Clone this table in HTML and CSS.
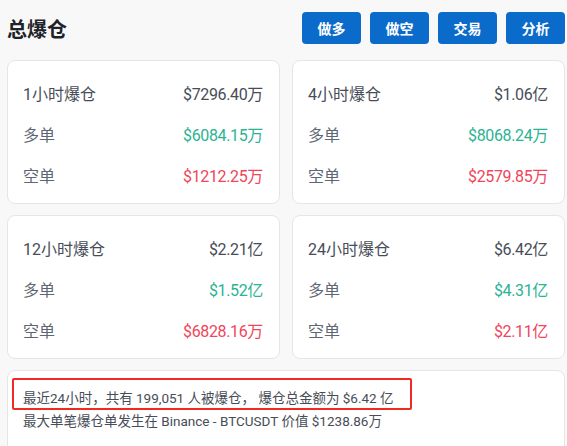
FILE: index.html
```html
<!DOCTYPE html>
<html lang="zh">
<head>
<meta charset="utf-8">
<link rel="stylesheet" href="styles.css">
</head>
<body>
<div class="page">
  <div class="header">
    <h1 class="title">总爆仓</h1>
    <div class="actions">
      <button class="btn">做多</button>
      <button class="btn">做空</button>
      <button class="btn">交易</button>
      <button class="btn">分析</button>
    </div>
  </div>
  <div class="grid">
    <div class="card">
      <div class="row head"><span class="label">1小时爆仓</span><span class="val">$7296.40万</span></div>
      <div class="row"><span class="label">多单</span><span class="val up">$6084.15万</span></div>
      <div class="row"><span class="label">空单</span><span class="val down">$1212.25万</span></div>
    </div>
    <div class="card">
      <div class="row head"><span class="label">4小时爆仓</span><span class="val">$1.06亿</span></div>
      <div class="row"><span class="label">多单</span><span class="val up">$8068.24万</span></div>
      <div class="row"><span class="label">空单</span><span class="val down">$2579.85万</span></div>
    </div>
    <div class="card">
      <div class="row head"><span class="label">12小时爆仓</span><span class="val">$2.21亿</span></div>
      <div class="row"><span class="label">多单</span><span class="val up">$1.52亿</span></div>
      <div class="row"><span class="label">空单</span><span class="val down">$6828.16万</span></div>
    </div>
    <div class="card">
      <div class="row head"><span class="label">24小时爆仓</span><span class="val">$6.42亿</span></div>
      <div class="row"><span class="label">多单</span><span class="val up">$4.31亿</span></div>
      <div class="row"><span class="label">空单</span><span class="val down">$2.11亿</span></div>
    </div>
  </div>
  <div class="summary">
    <p class="line highlight">最近24小时，共有 199,051 人被爆仓， 爆仓总金额为 $6.42 亿</p>
    <p class="line">最大单笔爆仓单发生在 Binance - BTCUSDT 价值 $1238.86万</p>
  </div>
</div>
</body>
</html>
```

FILE: styles.css
```css
* { box-sizing: border-box; }
html, body { margin: 0; padding: 0; }
body {
  background: #f8f8f8;
  font-family: Roboto, "Noto Sans CJK SC", sans-serif;
  color: #474d57;
}
.page {
  padding: 12px 2px 0 7px;
}
.header {
  display: flex;
  align-items: center;
  justify-content: space-between;
  height: 32px;
}
.title {
  margin: 0;
  font-size: 20px;
  font-weight: 700;
  color: #1e2329;
  font-family: "Noto Sans CJK SC", sans-serif;
}
.actions {
  display: flex;
  gap: 9px;
}
.btn {
  width: 59px;
  height: 32px;
  border: 0;
  border-radius: 4px;
  background: #0b6bcb;
  color: #fff;
  font-family: "Noto Sans CJK SC", sans-serif;
  font-size: 14px;
  font-weight: 700;
  padding: 0;
}
.grid {
  margin-top: 16px;
  display: grid;
  grid-template-columns: 273px 273px;
  column-gap: 12px;
  row-gap: 11px;
}
.card {
  background: #fff;
  border: 1px solid #e6e6e6;
  border-radius: 8px;
  height: 144px;
  padding: 11px 16px 8px 15px;
}
.row {
  height: 41px;
  display: flex;
  align-items: center;
  justify-content: space-between;
  font-size: 16px;
}
.label { color: #5e6673; }
.head .label { color: #474d57; }
.val { color: #474d57; letter-spacing: -0.35px; }
.val.up { color: #2bb394; }
.val.down { color: #f0455a; }
.summary {
  margin-top: 11px;
  background: #fff;
  border: 1px solid #e6e6e6;
  border-radius: 8px;
  height: 90px;
  padding: 7px 0 0 4px;
  font-size: 13.5px;
  color: #474d57;
}
.line {
  margin: 0;
  line-height: 22px;
  padding-left: 11px;
}
.highlight {
  width: 400px;
  border: 2px solid #f02a20;
  border-radius: 2px;
  padding: 7px 0 0 9px;
  line-height: 22px;
  height: 32px;
}
```
